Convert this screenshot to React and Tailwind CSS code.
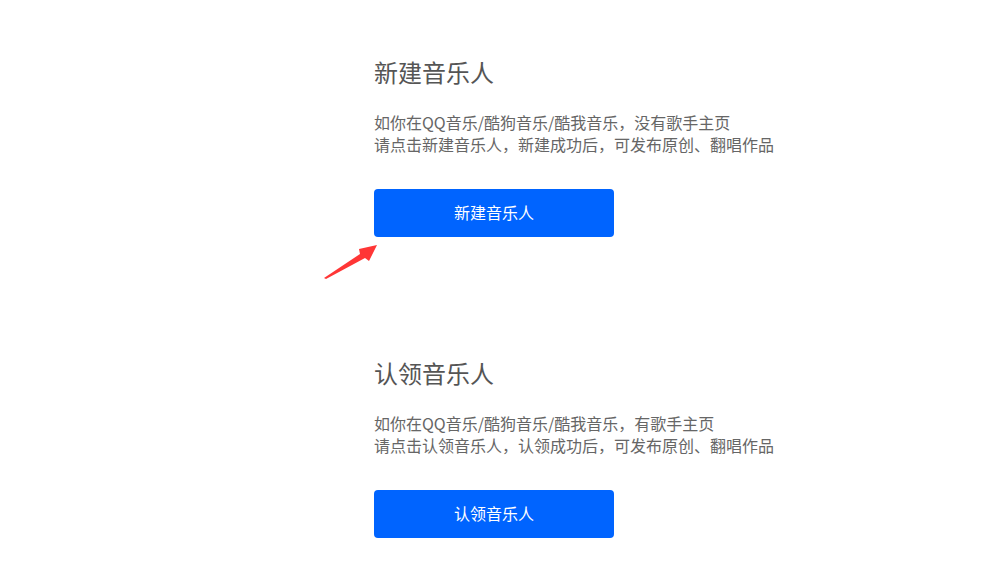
import React from "react";

const font = { fontFamily: '"Noto Sans CJK SC", "Noto Sans", sans-serif' };

function Section({ title, lines, action, className = "" }) {
  return (
    <div className={className}>
      <h2 className="text-[24px] leading-[32px] text-[#555] font-normal">{title}</h2>
      <p className="mt-[23px] text-[16px] leading-[22px] text-[#666]">
        {lines[0]}
        <br />
        {lines[1]}
      </p>
      <button className="mt-[34px] w-[240px] h-[48px] pb-[3px] rounded-[4px] bg-[#0064ff] text-white text-[16px] leading-[22px]">
        {action}
      </button>
    </div>
  );
}

export default function App() {
  return (
    <div className="relative w-[1007px] h-[582px] bg-white overflow-hidden" style={font}>
      <div className="ml-[374px] pt-[56px]">
        <Section
          title="新建音乐人"
          lines={["如你在QQ音乐/酷狗音乐/酷我音乐，没有歌手主页", "请点击新建音乐人，新建成功后，可发布原创、翻唱作品"]}
          action="新建音乐人"
        />
        <Section
          className="mt-[120px]"
          title="认领音乐人"
          lines={["如你在QQ音乐/酷狗音乐/酷我音乐，有歌手主页", "请点击认领音乐人，认领成功后，可发布原创、翻唱作品"]}
          action="认领音乐人"
        />
      </div>

      {/* red pointer arrow */}
      <svg className="absolute left-[318px] top-[236px]" width="64" height="46" viewBox="0 0 64 46">
        <polygon points="6,42 42,18 41,13 59,9 51,25 47,22 8,43" fill="#ff3636" />
      </svg>
    </div>
  );
}
